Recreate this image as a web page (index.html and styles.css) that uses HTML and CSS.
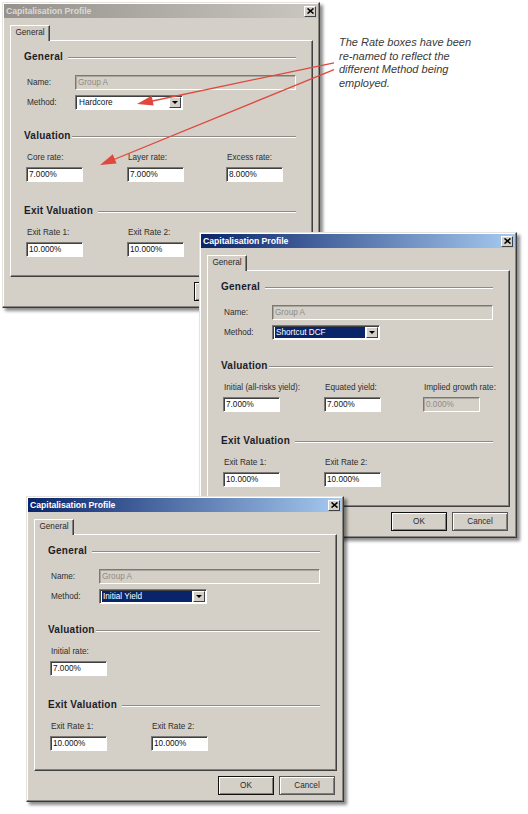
FILE: index.html
```html
<!DOCTYPE html>
<html>
<head>
<meta charset="utf-8">
<link rel="stylesheet" href="styles.css">
</head>
<body>
<div class="desk">

  <div class="dlg d1 inactive">
    <div class="titlebar"><span class="title">Capitalisation Profile</span><span class="close"><svg width="7" height="6" viewBox="0 0 7 6"><path d="M0.5 0.5 L6.5 5.5 M6.5 0.5 L0.5 5.5" stroke="#000" stroke-width="1.6"/></svg></span></div>
    <div class="tabs"><div class="tab">General</div></div>
    <div class="panel">
      <div class="heading"><span>General</span><i class="rule"></i></div>
      <div class="field f-name"><span class="lbl">Name:</span><span class="inp dis name">Group A</span></div>
      <div class="field f-method"><span class="lbl">Method:</span><span class="select"><span class="val">Hardcore</span><span class="arrow"></span></span></div>
      <div class="heading tight h-val"><span>Valuation</span><i class="rule"></i></div>
      <div class="rates">
        <div class="rate"><span class="lbl">Core rate:</span><span class="inp">7.000%</span></div>
        <div class="rate"><span class="lbl">Layer rate:</span><span class="inp">7.000%</span></div>
        <div class="rate"><span class="lbl">Excess rate:</span><span class="inp">8.000%</span></div>
      </div>
      <div class="heading h-exit"><span>Exit Valuation</span><i class="rule"></i></div>
      <div class="rates">
        <div class="rate"><span class="lbl">Exit Rate 1:</span><span class="inp">10.000%</span></div>
        <div class="rate"><span class="lbl">Exit Rate 2:</span><span class="inp">10.000%</span></div>
      </div>
    </div>
    <div class="buttons"><span class="btn def">OK</span><span class="btn">Cancel</span></div>
  </div>

  <svg class="arrows" width="528" height="200" viewBox="0 0 528 200">
    <line x1="334" y1="62.8" x2="150" y2="101.5" stroke="#e0483c" stroke-width="1.3"/>
    <polygon points="137,104 153.7,105.5 151.6,95.7" fill="#e0483c"/>
    <line x1="334" y1="69.6" x2="114" y2="159.5" stroke="#e0483c" stroke-width="1.3"/>
    <polygon points="100,165 116.6,163.4 112.8,154.2" fill="#e0483c"/>
  </svg>

  <div class="note">The Rate boxes have been<br>re-named to reflect the<br>different Method being<br>employed.</div>

  <div class="dlg d2">
    <div class="titlebar"><span class="title">Capitalisation Profile</span><span class="close"><svg width="7" height="6" viewBox="0 0 7 6"><path d="M0.5 0.5 L6.5 5.5 M6.5 0.5 L0.5 5.5" stroke="#000" stroke-width="1.6"/></svg></span></div>
    <div class="tabs"><div class="tab">General</div></div>
    <div class="panel">
      <div class="heading"><span>General</span><i class="rule"></i></div>
      <div class="field f-name"><span class="lbl">Name:</span><span class="inp dis name">Group A</span></div>
      <div class="field f-method"><span class="lbl">Method:</span><span class="select"><span class="val sel">Shortcut DCF</span><span class="arrow"></span></span></div>
      <div class="heading tight h-val"><span>Valuation</span><i class="rule"></i></div>
      <div class="rates">
        <div class="rate"><span class="lbl">Initial (all-risks yield):</span><span class="inp">7.000%</span></div>
        <div class="rate"><span class="lbl">Equated yield:</span><span class="inp">7.000%</span></div>
        <div class="rate"><span class="lbl">Implied growth rate:</span><span class="inp dis">0.000%</span></div>
      </div>
      <div class="heading h-exit"><span>Exit Valuation</span><i class="rule"></i></div>
      <div class="rates">
        <div class="rate"><span class="lbl">Exit Rate 1:</span><span class="inp">10.000%</span></div>
        <div class="rate"><span class="lbl">Exit Rate 2:</span><span class="inp">10.000%</span></div>
      </div>
    </div>
    <div class="buttons"><span class="btn def">OK</span><span class="btn">Cancel</span></div>
  </div>

  <div class="dlg d3">
    <div class="titlebar"><span class="title">Capitalisation Profile</span><span class="close"><svg width="7" height="6" viewBox="0 0 7 6"><path d="M0.5 0.5 L6.5 5.5 M6.5 0.5 L0.5 5.5" stroke="#000" stroke-width="1.6"/></svg></span></div>
    <div class="tabs"><div class="tab">General</div></div>
    <div class="panel">
      <div class="heading"><span>General</span><i class="rule"></i></div>
      <div class="field f-name"><span class="lbl">Name:</span><span class="inp dis name">Group A</span></div>
      <div class="field f-method"><span class="lbl">Method:</span><span class="select"><span class="val sel">Initial Yield</span><span class="arrow"></span></span></div>
      <div class="heading tight h-val"><span>Valuation</span><i class="rule"></i></div>
      <div class="rates">
        <div class="rate"><span class="lbl">Initial rate:</span><span class="inp">7.000%</span></div>
      </div>
      <div class="heading h-exit"><span>Exit Valuation</span><i class="rule"></i></div>
      <div class="rates">
        <div class="rate"><span class="lbl">Exit Rate 1:</span><span class="inp">10.000%</span></div>
        <div class="rate"><span class="lbl">Exit Rate 2:</span><span class="inp">10.000%</span></div>
      </div>
    </div>
    <div class="buttons"><span class="btn def">OK</span><span class="btn">Cancel</span></div>
  </div>

</div>
</body>
</html>
```

FILE: styles.css
```css
* { box-sizing: border-box; }
html, body { margin: 0; padding: 0; background: #fff; }
body { font-family: "Liberation Sans", Arial, sans-serif; }
.desk { position: relative; width: 528px; height: 814px; overflow: hidden; background: #fff; }

.dlg {
  position: absolute;
  width: 318px;
  height: 306px;
  background: #d4d0c8;
  border: 1px solid;
  border-color: #e6e3dd #3a3a3a #3a3a3a #e6e3dd;
  box-shadow: inset -1px -1px 0 #8a8782, inset 1px 1px 0 #fff, 3px 3px 3px rgba(0,0,0,0.45);
  display: flex;
  flex-direction: column;
}
.d1 { left: 2px; top: 2px; z-index: 1; }
.d2 { left: 199px; top: 232px; z-index: 3; }
.d3 { left: 26px; top: 496px; z-index: 4; }

.titlebar {
  height: 14px;
  margin: 1px 1px 0;
  padding: 0 2px 0 2px;
  display: flex;
  align-items: center;
  justify-content: space-between;
  background: linear-gradient(to right, #0a246a, #a6caf0);
}
.inactive .titlebar { background: linear-gradient(to right, #95928d, #cac7c2); }
.title { color: #fff; font-weight: bold; font-size: 8.7px; letter-spacing: -0.05px; }
.inactive .title { color: #dcd9d3; }
.close {
  width: 12px; height: 11px;
  background: #d4d0c8;
  border: 1px solid;
  border-color: #fff #404040 #404040 #fff;
  display: flex; align-items: center; justify-content: center;
}

.tabs { display: flex; margin: 7px 0 0 7px; height: 15px; position: relative; z-index: 1; }
.tab {
  width: 40px; height: 16px;
  background: #d4d0c8;
  border: 1px solid;
  border-bottom: none;
  border-color: #fff #404040 transparent #fff;
  box-shadow: inset -1px 0 0 #808080;
  font-size: 8.2px;
  line-height: 14px;
  text-align: center;
  color: #2a2a2a;
}

.panel {
  margin-left: 7px;
  width: 303px;
  height: 237px;
  border: 1px solid;
  border-color: #fff #404040 #404040 #fff;
  box-shadow: inset -1px -1px 0 #808080;
  padding: 9px 16px 0 13px;
  display: flex;
  flex-direction: column;
}

.heading {
  display: flex;
  align-items: center;
  gap: 5px;
  height: 12px;
  font-weight: bold;
  font-size: 10px;
  letter-spacing: 0.25px;
  color: #1c1c28;
}
.heading.tight { gap: 1px; }
.heading .rule {
  flex: 1;
  height: 2px;
  margin-top: 3px;
  border-top: 1px solid #8f8c87;
  border-bottom: 1px solid #fff;
}
.h-val { margin-top: 19px; }
.h-exit { margin-top: 22px; }

.lbl { font-size: 8.2px; color: #2e2e2e; white-space: nowrap; }

.field { display: flex; align-items: center; height: 15px; margin-left: 3px; }
.field .lbl { width: 48px; }
.f-name { margin-top: 13px; }
.f-method { margin-top: 5px; }

.inp {
  display: block;
  width: 57px; height: 15px;
  background: #fff;
  border: 1px solid;
  border-color: #7b7873 #fff #fff #7b7873;
  box-shadow: inset 1px 1px 0 #404040;
  font-size: 8.2px;
  line-height: 13px;
  padding-left: 2px;
  color: #111;
  white-space: nowrap;
}
.inp.dis { background: #d4d0c8; color: #8d8b87; box-shadow: inset 1px 1px 0 #a9a6a0; }
.inp.name { width: 221px; }

.select {
  width: 108px; height: 15px;
  display: flex;
  background: #fff;
  border: 1px solid;
  border-color: #7b7873 #fff #fff #7b7873;
  box-shadow: inset 1px 1px 0 #404040;
  padding: 1px;
}
.select .val {
  flex: 1;
  font-size: 8.2px;
  line-height: 11px;
  padding-left: 1px;
  margin: 0 1px 0 1px;
  color: #111;
  white-space: nowrap;
}
.select .val.sel { background: #0a246a; color: #fff; }
.select .arrow {
  width: 12px;
  background: #d4d0c8;
  border: 1px solid;
  border-color: #fff #404040 #404040 #fff;
  display: flex; align-items: center; justify-content: center;
}
.select .arrow::after {
  content: "";
  border-left: 3px solid transparent;
  border-right: 3px solid transparent;
  border-top: 3px solid #000;
}

.rates { display: grid; grid-template-columns: 101px 99px 1fr; margin-left: 2px; margin-top: 12px; }
.rate { display: flex; flex-direction: column; gap: 4px; }
.rate .lbl { padding-left: 1px; height: 10px; line-height: 10px; }

.buttons { display: flex; justify-content: flex-end; gap: 5px; margin-top: 5px; padding-right: 8px; }
.btn {
  width: 56px; height: 19px;
  border: 1px solid #555;
  box-shadow: inset 1px 1px 0 #fff, inset -1px -1px 0 #808080;
  font-size: 8.2px;
  display: flex; align-items: center; justify-content: center;
  color: #2a2a2a;
}
.btn.def { border-color: #111; }

.arrows { position: absolute; left: 0; top: 0; z-index: 2; }
.note {
  position: absolute;
  left: 339px; top: 36px;
  z-index: 2;
  font-style: italic;
  font-size: 11px;
  line-height: 13.7px;
  color: #3a3a3a;
  white-space: nowrap;
}
```
